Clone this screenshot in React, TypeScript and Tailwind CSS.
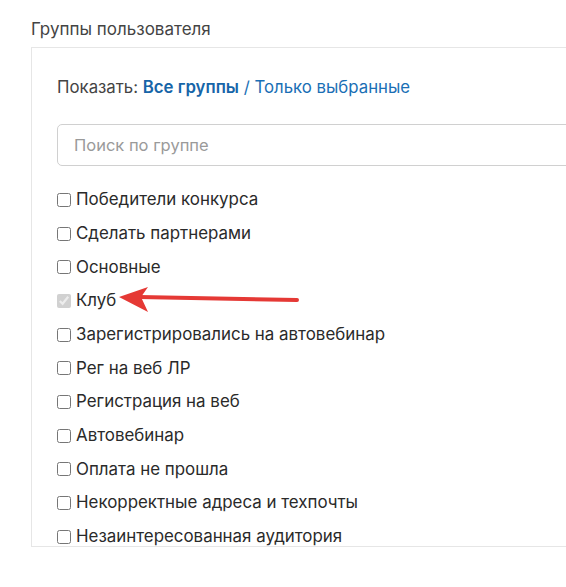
import React from "react";

const groups = [
  { name: "Победители конкурса" },
  { name: "Сделать партнерами" },
  { name: "Основные" },
  { name: "Клуб", locked: true },
  { name: "Зарегистрировались на автовебинар" },
  { name: "Рег на веб ЛР" },
  { name: "Регистрация на веб" },
  { name: "Автовебинар" },
  { name: "Оплата не прошла" },
  { name: "Некорректные адреса и техпочты" },
  { name: "Незаинтересованная аудитория" },
];

export default function App() {
  return (
    <div className="relative w-[566px] h-[587px] overflow-hidden bg-white font-['Inter',sans-serif] text-[#333]">
      <div className="pl-[31px] pt-[18px]">
        <div className="text-[17px] leading-[22px] text-[#444] mb-[7px]">Группы пользователя</div>

        {/* groups box */}
        <div className="w-[560px] h-[500px] border border-[#e6e6e6] pl-[25px] pt-[28px]">
          <div className="text-[16.8px] leading-[22px] text-[#444]">
            Показать: <span className="font-semibold text-[#1665a8]">Все группы</span>{" "}
            <span className="text-[#1a6fb5]">/ Только выбранные</span>
          </div>

          <input
            type="text"
            placeholder="Поиск по группе"
            className="mt-[26px] block w-[540px] h-[42px] rounded-[5px] border border-[#d0d0d0] px-4 text-[16.5px] placeholder:text-[#9a9a9a] outline-none"
          />

          <ul className="mt-[17px] flex flex-col">
            {groups.map((g) => (
              <li key={g.name} className="flex items-center h-[33.7px] text-[16.9px] text-[#2a2a2a]">
                <input
                  type="checkbox"
                  className="m-0 mr-[5px] w-[14px] h-[14px]"
                  checked={!!g.locked}
                  disabled={!!g.locked}
                  readOnly
                />
                <span>{g.name}</span>
              </li>
            ))}
          </ul>
        </div>
      </div>

      {/* red pointer arrow */}
      <svg className="absolute left-[115px] top-[283px]" width="190" height="32" viewBox="0 0 190 32">
        <line x1="24" y1="14" x2="182" y2="17" stroke="#e53935" strokeWidth="4" strokeLinecap="round" />
        <polygon points="4,14 33,4 26,14 33,29" fill="#e53935" />
      </svg>
    </div>
  );
}
